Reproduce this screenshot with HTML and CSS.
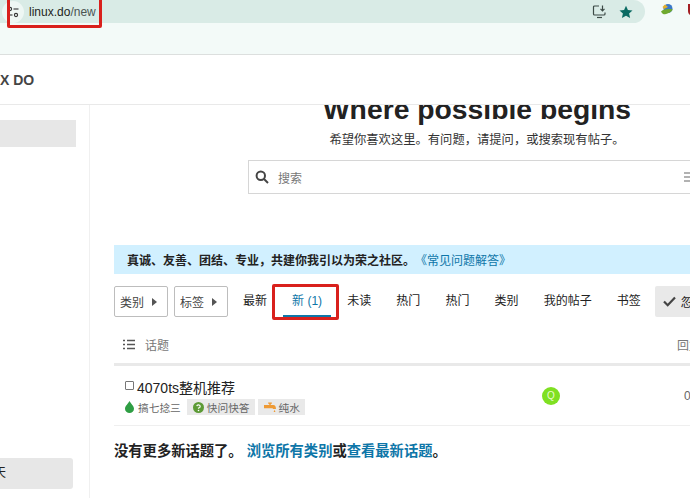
FILE: index.html
```html
<!DOCTYPE html>
<html lang="zh-CN">
<head>
<meta charset="utf-8">
<title>linux.do/new</title>
<link rel="stylesheet" href="styles.css">
</head>
<body>
<div class="page">
  <div class="browser">
    <div class="address-row">
      <div class="address">
        <span class="site-chip">
          <svg width="14" height="14" viewBox="0 0 14 14" fill="none" stroke="#333" stroke-width="1.1"><circle cx="4" cy="4" r="1.6"/><path d="M7.5 4H12.5"/><circle cx="10" cy="10" r="1.6"/><path d="M1.5 10H6.5"/></svg>
        </span>
        <span class="url">linux.do<span class="url-path">/new</span></span>
        <span class="address-tools">
          <svg width="15" height="15" viewBox="0 0 15 15" fill="none" stroke="#3c4a46" stroke-width="1.2"><path d="M7 2H2.5A1 1 0 0 0 1.5 3V10A1 1 0 0 0 2.5 11H12A1 1 0 0 0 13 10V8.500"/><path d="M5 13.500H10"/><path d="M10.500 1.500V6.500M8.500 4.800L10.500 6.800L12.500 4.800"/></svg>
          <svg width="14" height="14" viewBox="0 0 14 14"><path fill="#0b6b63" d="M7 .8L8.900 5 13.500 5.500 10.100 8.600 11.100 13.100 7 10.800 2.900 13.100 3.900 8.600 .5 5.500 5.100 5Z"/></svg>
        </span>
      </div>
      <div class="extensions">
        <svg width="14" height="14" viewBox="0 0 14 14"><circle cx="8" cy="5.500" r="4.500" fill="#3a78c9"/><path fill="#6fa92f" d="M1 8.500C4 6 8 5.500 13 6.500 12 8 10 9.500 7.500 10.500 5 12 2.500 11.500 1 8.500Z"/><path fill="#e3b02d" d="M5 1.500L8 4 4 6 2.500 4Z"/></svg>
        <svg class="shield" width="8" height="14" viewBox="0 0 8 14"><path fill="#a31d22" d="M0 1H8V8C8 10.500 6 12.500 4 13.500 2 12.500 0 10.500 0 8Z"/></svg>
      </div>
    </div>
    <div class="bookmarks"></div>
  </div>

  <header class="site-header">X DO</header>

  <div class="layout">
    <aside class="sidebar">
      <div class="side-item side-top"></div>
      <div class="side-item side-bottom">天</div>
    </aside>

    <main class="main">
      <div class="content">
        <h1 class="hero-title"><span>Where possible begins</span></h1>
        <p class="hero-sub">希望你喜欢这里。有问题，请提问，或搜索现有帖子。</p>
        <div class="search">
          <svg width="14" height="14" viewBox="0 0 14 14" fill="none" stroke="#444" stroke-width="2"><circle cx="5.800" cy="5.800" r="4.200"/><path d="M9 9L13 13"/></svg>
          <span class="search-label">搜索</span>
          <svg class="search-options" width="12" height="12" viewBox="0 0 12 12" stroke="#666" stroke-width="1.200"><path d="M0 2H12M0 6H12M0 10H12"/></svg>
        </div>

        <div class="banner"><strong>真诚、友善、团结、专业，共建你我引以为荣之社区。</strong><a class="link" href="#">《常见问题解答》</a></div>

        <nav class="nav">
          <button class="drop">类别<span class="caret"></span></button>
          <button class="drop">标签<span class="caret"></span></button>
          <ul class="tabs">
            <li class="tab">最新</li>
            <li class="tab active">新 (1)</li>
            <li class="tab">未读</li>
            <li class="tab">热门</li>
            <li class="tab">热门</li>
            <li class="tab">类别</li>
            <li class="tab">我的帖子</li>
            <li class="tab">书签</li>
          </ul>
          <button class="dismiss">
            <svg width="13" height="11" viewBox="0 0 13 11" fill="none" stroke="#444" stroke-width="2.200"><path d="M1 5.500L4.700 9.200L12 1.500"/></svg>
            忽略
          </button>
        </nav>

        <div class="table-head">
          <div class="th-topic">
            <svg width="12" height="11" viewBox="0 0 12 11" stroke="#555" stroke-width="1.300" fill="none"><path d="M4 1.500H12M4 5.500H12M4 9.500H12M0 1.500H2M0 5.500H2M0 9.500H2"/></svg>
            <span>话题</span>
          </div>
          <div class="th-replies">回复</div>
        </div>

        <div class="row">
          <div class="topic">
            <div class="topic-title"><span class="checkbox"></span><span>4070ts整机推荐</span></div>
            <div class="topic-meta">
              <svg width="9" height="12" viewBox="0 0 9 12"><path fill="#2f9e44" d="M4.500 0C6 3 9 5 9 7.700A4.500 4.300 0 0 1 0 7.700C0 5 3 3 4.500 0Z"/></svg>
              <span class="category">搞七捻三</span>
              <span class="tag">
                <svg width="11" height="11" viewBox="0 0 11 11"><circle cx="5.500" cy="5.500" r="5.500" fill="#5c9a35"/><path d="M3.800 4.200A1.700 1.600 0 1 1 5.500 6V6.700" fill="none" stroke="#fff" stroke-width="1.200"/><circle cx="5.500" cy="8.500" r=".8" fill="#fff"/></svg>
                快问快答
              </span>
              <span class="tag">
                <svg width="12" height="11" viewBox="0 0 13 11"><path fill="#ee9a35" d="M4.500 0H8.500V1.500H7.300V2.800H10C12 2.800 13 4.500 13 7.200H9.800C9.800 6.500 9.300 6.200 8.500 6.200H0V2.800H5.700V1.500H4.500Z"/><path fill="#ee9a35" d="M11.400 8L12.400 10.500H10.400Z"/></svg>
                纯水
              </span>
            </div>
          </div>
          <div class="poster-cell"><span class="avatar">Q</span></div>
          <div class="replies-cell">0</div>
        </div>

        <p class="footer-note"><strong>没有更多新话题了。</strong> <a class="link strong-link" href="#">浏览所有类别</a><strong>或</strong><a class="link strong-link" href="#">查看最新话题</a><strong>。</strong></p>
      </div>
    </main>
  </div>

  <div class="mark mark-url"></div>
  <div class="mark mark-tab"></div>
</div>
</body>
</html>
```

FILE: styles.css
```css
* { box-sizing: border-box; }
html, body { margin: 0; padding: 0; background: #fff; }
body {
  font-family: "Liberation Sans", "Noto Sans CJK SC", sans-serif;
  color: #222;
  overflow: hidden;
}
.page {
  position: relative;
  width: 690px;
  height: 498px;
  overflow: hidden;
  display: flex;
  flex-direction: column;
}

/* browser chrome */
.browser { background: #f3faf8; height: 55px; border-bottom: 1px solid #dcdfde; flex: none; }
.address-row { height: 23px; display: flex; align-items: flex-start; }
.address {
  width: 645px;
  height: 23px;
  background: #d9ebe6;
  border-radius: 0 12px 12px 0;
  display: flex;
  align-items: center;
  flex: none;
}
.site-chip {
  width: 22px;
  height: 22px;
  margin-left: 2px;
  border-radius: 50%;
  background: #eef7f4;
  display: flex;
  align-items: center;
  justify-content: center;
}
.url { margin-left: 5px; font-size: 12px; color: #1d2422; font-family: "Liberation Sans", sans-serif; }
.url-path { color: #4b5553; }
.address-tools { margin-left: auto; margin-right: 12px; display: flex; align-items: center; gap: 12px; }
.extensions { display: flex; align-items: center; gap: 14px; padding: 3px 0 0 15px; flex: none; }
.shield { flex: none; }
.bookmarks { height: 31px; }

/* site header */
.site-header {
  height: 50px;
  flex: none;
  background: #fff;
  border-bottom: 1px solid #e9e9e9;
  display: flex;
  align-items: center;
  font-size: 14px;
  font-weight: 700;
  color: #444;
}

/* layout */
.layout { flex: 1; min-height: 0; display: flex; }
.sidebar {
  width: 90px;
  flex: none;
  border-right: 1px solid #f0f0f0;
  padding: 15px 0 9px;
  display: flex;
  flex-direction: column;
}
.side-item { background: #e7e7e7; }
.side-top { width: 76px; height: 27px; }
.side-bottom {
  width: 73px;
  height: 31px;
  margin-top: auto;
  border-radius: 0 3px 3px 0;
  font-size: 12px;
  line-height: 31px;
  text-indent: -6px;
  color: #222;
}
.main { flex: 1; min-width: 0; overflow: hidden; padding-left: 24px; }
.content { width: 726px; }

/* hero */
.hero-title {
  margin: 0;
  height: 21px;
  overflow: hidden;
  display: flex;
  align-items: flex-end;
  justify-content: center;
  font-size: 28.300px;
  font-weight: 700;
  line-height: 34px;
  color: #222;
}
.hero-sub { margin: 5px 0 0; height: 18px; text-align: center; font-size: 12.300px; line-height: 18px; color: #333; }
.search {
  width: 458px;
  height: 34px;
  margin: 11px auto 0;
  border: 1px solid #d6d6d6;
  display: flex;
  align-items: center;
  padding: 0 6px;
  background: #fff;
}
.search-label { margin-left: 9px; font-size: 12px; color: #777; }
.search-options { margin-left: auto; margin-right: 3px; }

/* banner */
.banner {
  height: 29px;
  margin-top: 51px;
  background: #d1f0ff;
  padding-left: 13px;
  display: flex;
  align-items: center;
  font-size: 12px;
}
.banner strong { font-weight: 700; color: #222; }
.link { color: #0e76a8; text-decoration: none; }

/* nav */
.nav { height: 32px; margin-top: 12px; display: flex; align-items: flex-start; }
.drop {
  width: 54px;
  height: 31px;
  margin-right: 6px;
  border: 1px solid #bdbdbd;
  border-radius: 2px;
  background: #fff;
  font: inherit;
  font-size: 12px;
  color: #444;
  padding: 0 0 0 5px;
  display: flex;
  align-items: center;
  gap: 8px;
  flex: none;
}
.caret { width: 0; height: 0; border-left: 5px solid #555; border-top: 4px solid transparent; border-bottom: 4px solid transparent; }
.tabs { list-style: none; margin: 0; padding: 0; display: flex; gap: 7.100px; flex: none; }
.tab { height: 31px; padding: 0 9px; font-size: 12px; line-height: 31px; color: #222; }
.tab.active { color: #0e76a8; border-bottom: 2px solid #0e76a8; }
.dismiss {
  margin-left: 5px;
  width: 70px;
  height: 31px;
  border: 0;
  border-radius: 2px;
  background: #e9e9e9;
  font: inherit;
  font-size: 12px;
  color: #222;
  padding: 0 0 0 8px;
  display: flex;
  align-items: center;
  gap: 5px;
  flex: none;
}

/* table */
.table-head {
  height: 48px;
  border-bottom: 3px solid #e9e9e9;
  display: flex;
  align-items: center;
  font-size: 12px;
  color: #777;
  padding-top: 8px;
}
.th-topic { width: 563px; display: flex; align-items: center; gap: 10px; padding-left: 9px; flex: none; }
.th-replies { white-space: nowrap; }
.row { height: 60px; border-bottom: 1px solid #efefef; display: flex; }
.topic { width: 428px; padding: 12px 0 0 11px; flex: none; }
.topic-title { display: flex; align-items: center; height: 18px; font-size: 14px; color: #222; gap: 3px; }
.checkbox { width: 9px; height: 9px; border: 1px solid #777; border-radius: 1px; margin-top: -3px; flex: none; }
.topic-meta { display: flex; align-items: center; height: 16px; margin-top: 3px; font-size: 10.700px; color: #666; }
.category { margin-left: 4px; margin-right: 6px; }
.tag {
  height: 16px;
  padding: 0 5px 0 6px;
  margin-right: 3px;
  background: #e9e9e9;
  display: flex;
  align-items: center;
  gap: 3px;
  color: #666;
}
.poster-cell { width: 135px; display: flex; align-items: center; flex: none; }
.avatar {
  width: 18px;
  height: 18px;
  border-radius: 50%;
  background: #7fe022;
  color: #e8fbd0;
  font-size: 10px;
  line-height: 18px;
  text-align: center;
}
.replies-cell { display: flex; align-items: center; padding-left: 7px; font-size: 12px; color: #666; }

/* footer */
.footer-note { margin: 16px 0 0; font-size: 14.300px; line-height: 18px; color: #222; }
.strong-link { font-weight: 700; }

/* annotation frames */
.mark { position: absolute; border: 3px solid #d9201c; border-radius: 2px; }
.mark-url { left: 7px; top: -3px; width: 95px; height: 31px; }
.mark-tab { left: 272px; top: 284px; width: 67px; height: 36px; }
```
